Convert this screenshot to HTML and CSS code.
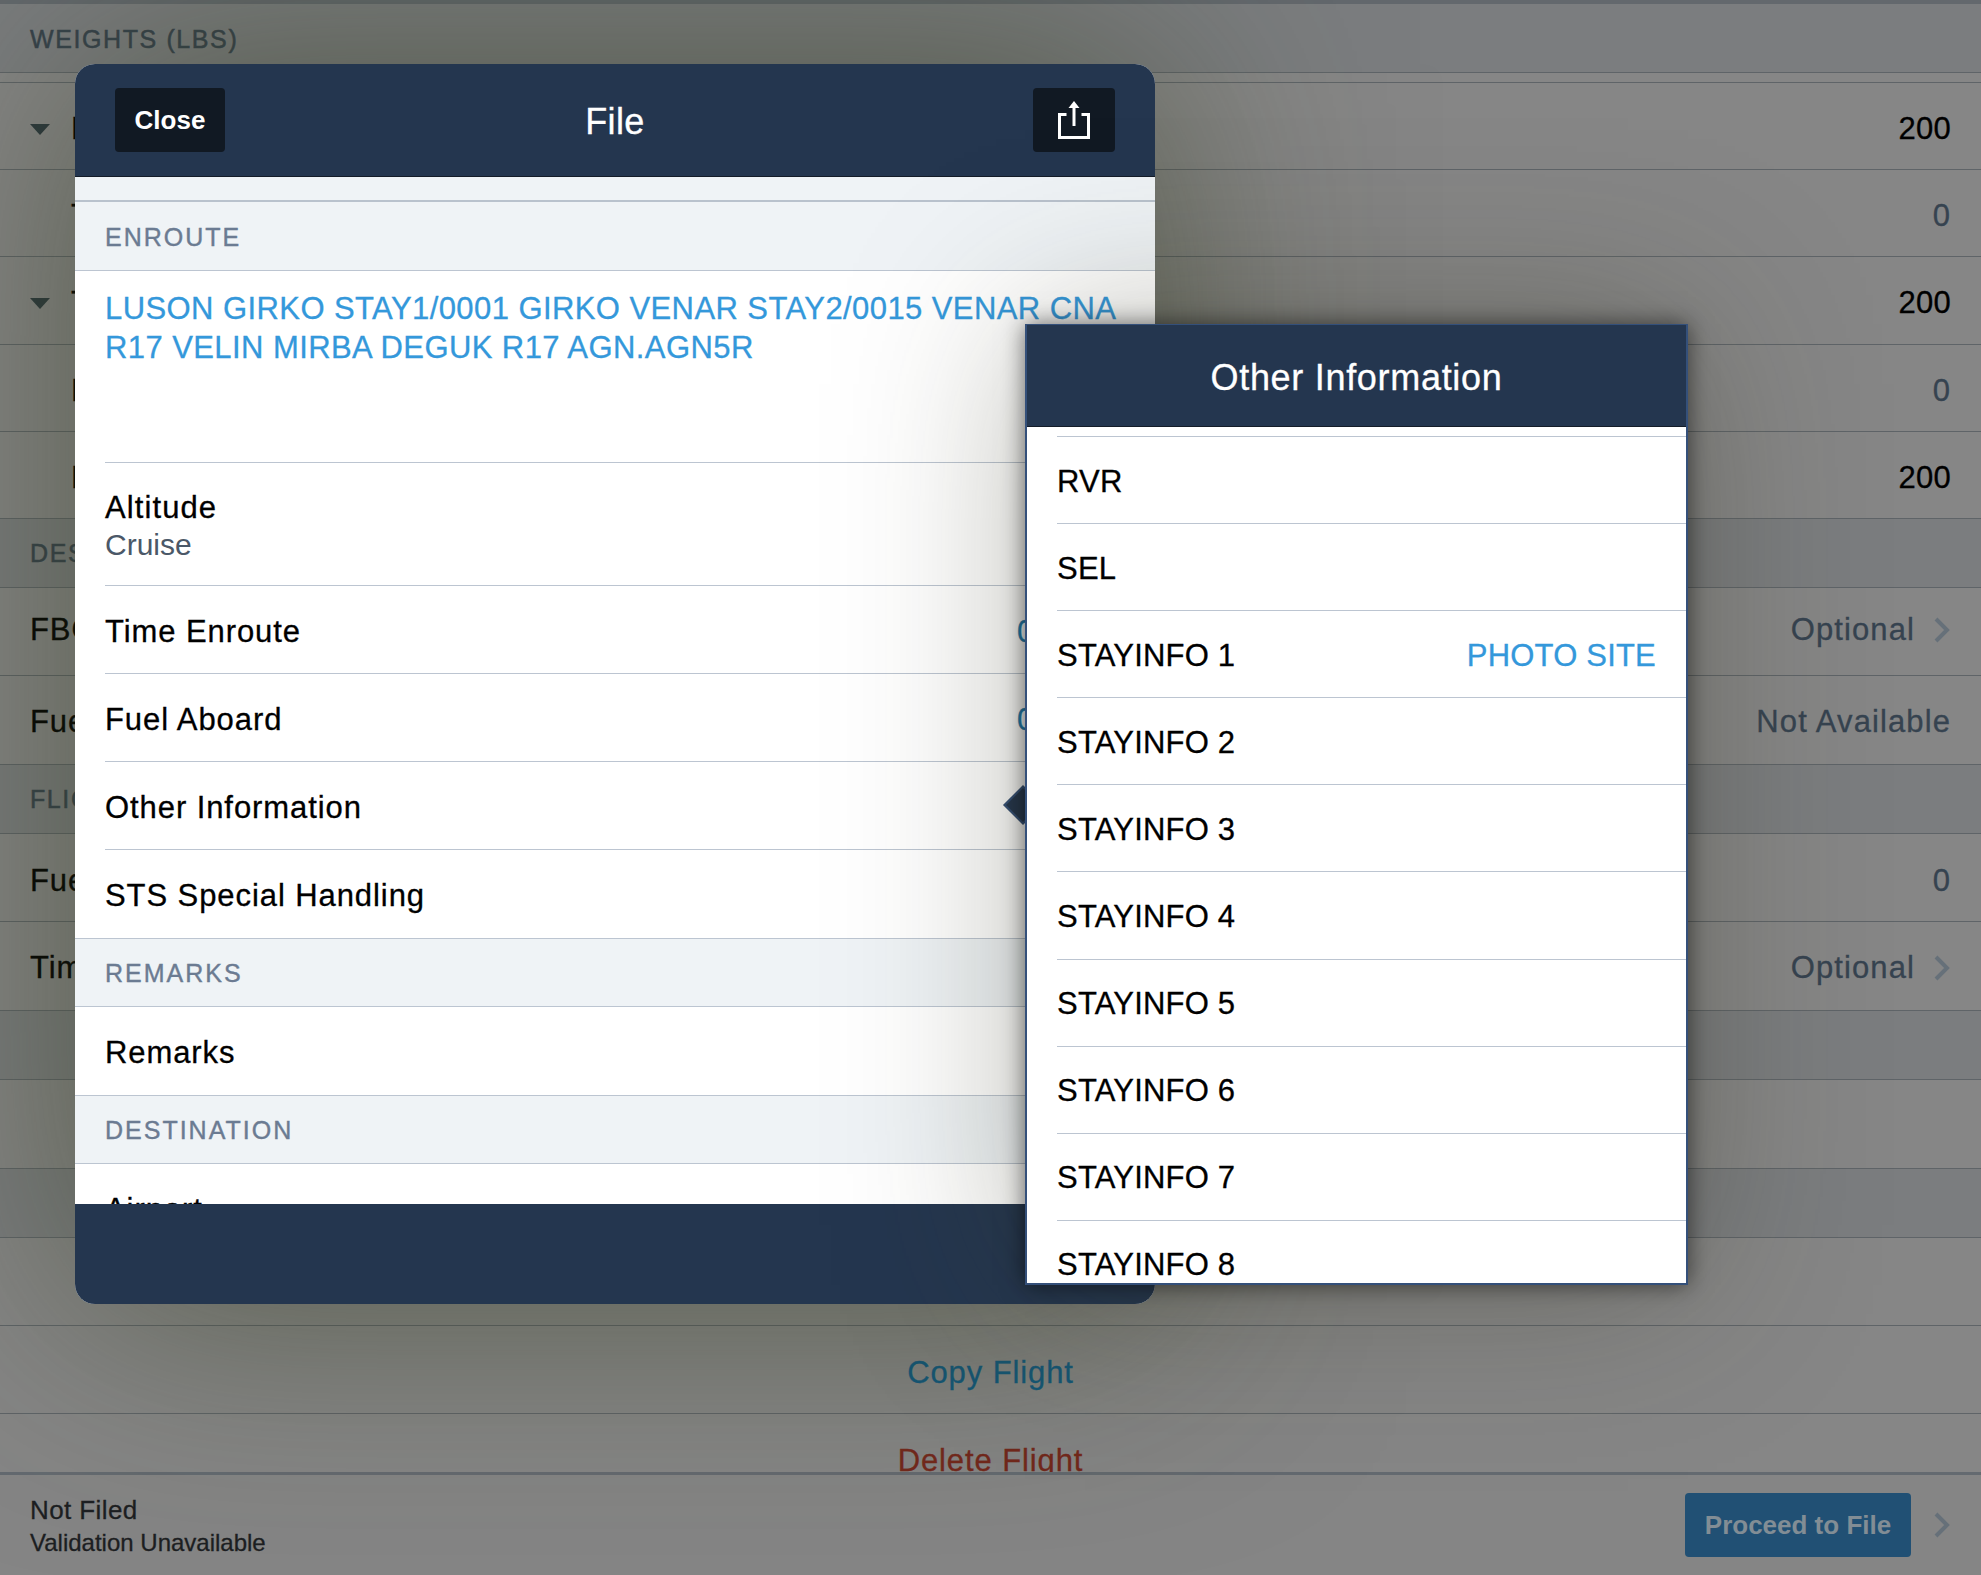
FILE: index.html
```html
<!DOCTYPE html>
<html lang="en">
<head>
<meta charset="utf-8">
<title>File</title>
<link rel="stylesheet" href="styles.css">
</head>
<body>
<div class="screen">
  <main class="page">
    <div class="scroll">
      <div class="section">WEIGHTS (LBS)</div>
      <div class="gap"></div>
      <div class="row row-w"><span class="tri"></span><span class="label">Payload</span><span class="val strong">200</span></div>
      <div class="row row-w row-in"><span class="label">Tare</span><span class="val">0</span></div>
      <div class="row row-w"><span class="tri"></span><span class="label">Total</span><span class="val strong">200</span></div>
      <div class="row row-w row-in"><span class="label">Fuel</span><span class="val">0</span></div>
      <div class="row row-w row-in"><span class="label">Ramp</span><span class="val strong">200</span></div>
      <div class="section">DESTINATION</div>
      <div class="row row-up"><span class="label">FBO</span><span class="val">Optional</span><svg class="chev" viewBox="0 0 18 26"><path d="M3 2l11 11L3 24"/></svg></div>
      <div class="row row-x"><span class="label">Fuel</span><span class="val">Not Available</span></div>
      <div class="section">FLIGHT</div>
      <div class="row row-low"><span class="label">Fuel</span><span class="val">0</span></div>
      <div class="row row-x"><span class="label">Time</span><span class="val">Optional</span><svg class="chev" viewBox="0 0 18 26"><path d="M3 2l11 11L3 24"/></svg></div>
      <div class="section"></div>
      <div class="row row-x"></div>
      <div class="section"></div>
      <div class="row"></div>
      <div class="row action link">Copy Flight</div>
      <div class="row action danger">Delete Flight</div>
    </div>
    <footer class="status">
      <div class="status-text">
        <div class="status-main">Not Filed</div>
        <div class="status-sub">Validation Unavailable</div>
      </div>
      <div class="proceed">Proceed to File</div>
      <svg class="chev chev-foot" viewBox="0 0 18 26"><path d="M3 2l11 11L3 24"/></svg>
    </footer>
  </main>

  <section class="modal">
    <header class="modal-head">
      <div class="btn btn-close">Close</div>
      <h1 class="modal-title">File</h1>
      <div class="btn btn-share">
        <svg class="share" viewBox="0 0 32 38"><path class="s" d="M8.5 13.5H1.5V36.5H30.5V13.5H23.5M16 5V25"/><path class="f" d="M16 0L21.5 7H10.5Z"/></svg>
      </div>
    </header>
    <div class="modal-body">
      <div class="spacer"></div>
      <div class="m-section">ENROUTE</div>
      <div class="route">LUSON GIRKO STAY1/0001 GIRKO VENAR STAY2/0015 VENAR CNA R17 VELIN MIRBA DEGUK R17 AGN.AGN5R</div>
      <div class="m-row m-tall"><div class="two"><div>Altitude</div><div class="sub">Cruise</div></div></div>
      <div class="m-row">Time Enroute<span class="m-val">0:00</span></div>
      <div class="m-row">Fuel Aboard<span class="m-val">0:00</span></div>
      <div class="m-row">Other Information</div>
      <div class="m-row m-end">STS Special Handling</div>
      <div class="m-section m-sec-line">REMARKS</div>
      <div class="m-row m-full">Remarks</div>
      <div class="m-section m-sec-line">DESTINATION</div>
      <div class="m-row m-full">Airport</div>
    </div>
    <div class="modal-foot"></div>
  </section>

  <div class="arrow"></div>
  <section class="pop">
    <header class="pop-head">Other Information</header>
    <div class="pop-body">
      <div class="p-top"></div>
      <div class="p-row">RVR</div>
      <div class="p-row">SEL</div>
      <div class="p-row">STAYINFO 1<span class="p-val">PHOTO SITE</span></div>
      <div class="p-row">STAYINFO 2</div>
      <div class="p-row">STAYINFO 3</div>
      <div class="p-row">STAYINFO 4</div>
      <div class="p-row">STAYINFO 5</div>
      <div class="p-row">STAYINFO 6</div>
      <div class="p-row">STAYINFO 7</div>
      <div class="p-row">STAYINFO 8</div>
    </div>
  </section>
</div>
</body>
</html>
```
FILE: styles.css
```css
* { box-sizing: border-box; }
html, body { margin: 0; padding: 0; width: 1981px; height: 1575px; overflow: hidden; }
body { font-family: "Liberation Sans", Arial, sans-serif; color: #000; -webkit-text-stroke: .3px currentColor; }

.screen { position: relative; width: 1981px; height: 1575px; overflow: hidden; background: #868686; }

/* dimmed page beneath */
.page { display: flex; flex-direction: column; height: 1575px; border-top: 4px solid #63686d; }
.scroll { height: 1468px; overflow: hidden; flex: none; }
.section { height: 69px; padding: 2px 30px 0; display: flex; align-items: center; background: #7b7d7f; border-bottom: 1px solid #5f6468; font-size: 25px; letter-spacing: 1.6px; color: #36424c; -webkit-text-stroke: .5px currentColor; }
.gap { height: 10px; border-bottom: 1px solid #5f6468; }
.row { height: 88px; padding: 6px 30px 0; display: flex; align-items: center; border-bottom: 1px solid #5f6468; font-size: 31px; letter-spacing: .9px; }
.row-w { height: 87.2px; }
.row-x { height: 89px; padding-top: 4px; }
.row-low { padding-top: 7px; }
.row-in { padding-left: 71px; }
.row-up { padding-top: 0; padding-bottom: 3px; }
.tri { width: 0; height: 0; margin-right: 21px; border-left: 10px solid transparent; border-right: 10px solid transparent; border-top: 11px solid #2c393e; }
.val { margin-left: auto; color: #364350; letter-spacing: 1.1px; }
.val.strong { color: #000; letter-spacing: .3px; }
.chev { width: 18px; height: 26px; margin-left: 18px; flex: none; }
.chev path { fill: none; stroke: #667079; stroke-width: 4; }
.action { justify-content: center; padding-top: 8px; }
.link { color: #125a7f; }
.danger { color: #74281c; }

.status { flex: 1; display: flex; align-items: center; padding: 2px 30px 0; background: #858585; border-top: 3px solid #646a70; }
.status-text { margin-right: auto; color: #1d1f22; }
.status-main { font-size: 26px; letter-spacing: .4px; }
.status-sub { font-size: 24px; margin-top: 3px; }
.proceed { width: 226px; height: 64px; margin-top: -2px; border-radius: 4px; background: #215074; color: #828d95; font-size: 26px; font-weight: 700; -webkit-text-stroke: 0; display: flex; align-items: center; justify-content: center; }
.chev-foot { margin-left: 22px; margin-top: -2px; }

/* modal sheet */
.modal { position: absolute; left: 75px; top: 64px; width: 1080px; height: 1240px; border-radius: 20px; overflow: hidden; display: flex; flex-direction: column; background: #fff; box-shadow: 0 0 240px rgba(50,58,30,.58); }
.modal-head { height: 113px; flex: none; display: grid; grid-template-columns: 1fr auto 1fr; align-items: center; padding: 0 40px; background: #24364f; border-bottom: 1px solid #141c28; }
.modal-title { margin: 3px 0 0; font-size: 36px; font-weight: 400; letter-spacing: .4px; color: #fff; }
.btn { height: 64px; margin-top: -1px; border-radius: 4px; background: #111923; color: #fff; display: flex; align-items: center; justify-content: center; }
.btn-close { width: 110px; padding-top: 2px; font-size: 26px; font-weight: 700; -webkit-text-stroke: 0; justify-self: start; }
.btn-share { width: 82px; justify-self: end; }
.share { width: 32px; height: 38px; }
.share .s { fill: none; stroke: #fff; stroke-width: 3; }
.share .f { fill: #fff; }
.modal-body { height: 1027px; flex: none; overflow: hidden; font-size: 31px; letter-spacing: .92px; }
.spacer { height: 25px; background: #eff3f6; border-bottom: 2px solid #b9c2cd; }
.m-section { height: 69px; padding: 2px 30px 0; display: flex; align-items: center; background: #eff3f6; border-bottom: 1px solid #bcc5d1; font-size: 25px; letter-spacing: 2px; color: #6b7b92; -webkit-text-stroke: .4px currentColor; }
.m-sec-line { border-top: 1px solid #bcc5d1; letter-spacing: 2px; }
.route { height: 191px; padding: 18px 30px 0; color: #3498db; line-height: 39px; letter-spacing: .42px; }
.m-row { margin-left: 30px; height: 88px; padding-top: 4px; display: flex; align-items: center; border-top: 1px solid #bcc5d1; }
.m-tall { height: 123px; padding-top: 0; }
.m-end { height: 89px; }
.m-full { margin-left: 0; padding-left: 30px; border-top: 0; }
.two { line-height: 38px; margin-top: 4px; }
.two > div:first-child { margin-bottom: -1px; letter-spacing: 1.1px; }
.sub { color: #4b5868; font-size: 30px; letter-spacing: 0; -webkit-text-stroke: 0; }
.m-val { position: absolute; left: 942px; color: #1d7cb0; }
.modal-foot { flex: 1; background: #24364f; }

/* popover */
.pop { position: absolute; left: 1025px; top: 324px; width: 663px; height: 961px; border: 2px solid #34507a; border-top-width: 1px; overflow: hidden; display: flex; flex-direction: column; background: #fff; box-shadow: 0 0 22px rgba(0,0,0,.55), 0 0 170px rgba(50,50,30,.34); }
.pop-head { flex: none; height: 102px; padding-top: 4px; display: flex; align-items: center; justify-content: center; background: #24364f; border-bottom: 1px solid #141c28; color: #fff; font-size: 36px; letter-spacing: .7px; }
.pop-body { font-size: 31px; letter-spacing: .2px; }
.p-top { height: 9px; }
.p-row { margin-left: 30px; height: 87.1px; padding: 3px 30px 0 0; display: flex; align-items: center; justify-content: space-between; border-top: 1px solid #bcc5d1; }
.p-val { color: #3498db; }
.arrow { position: absolute; left: 1009px; top: 791px; width: 28px; height: 28px; transform: rotate(45deg); background: #24364f; border: 2px solid #34507a; }
```
